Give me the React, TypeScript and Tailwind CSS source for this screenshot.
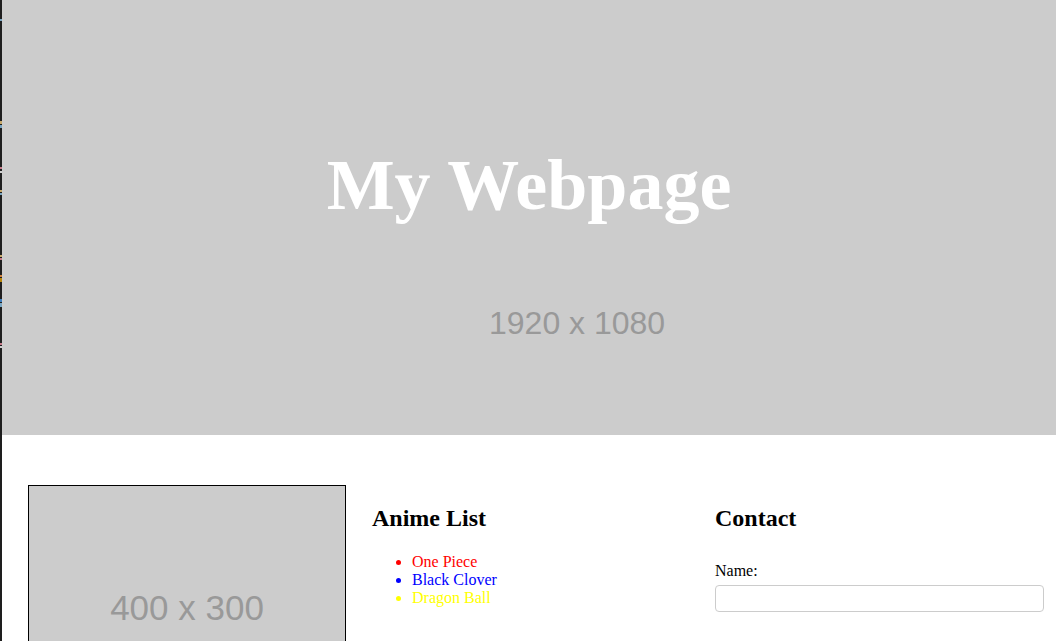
const marks = [
  { top: 19, h: 2, color: '#7aa6c2' },
  { top: 121, h: 3, color: '#c8a96a' },
  { top: 125, h: 3, color: '#7aa6c2' },
  { top: 167, h: 2, color: '#c77b8a' },
  { top: 171, h: 2, color: '#d0d0d0' },
  { top: 190, h: 2, color: '#c8a96a' },
  { top: 193, h: 2, color: '#7aa6c2' },
  { top: 255, h: 2, color: '#c8a96a' },
  { top: 258, h: 2, color: '#c77b8a' },
  { top: 275, h: 2, color: '#d0803a' },
  { top: 278, h: 4, color: '#b8860b' },
  { top: 299, h: 3, color: '#3d7ebf' },
  { top: 303, h: 4, color: '#7aa6c2' },
  { top: 343, h: 2, color: '#c77b8a' },
  { top: 346, h: 2, color: '#d0d0d0' },
];

const animeList = [
  { name: 'One Piece', color: 'text-[#ff0000] marker:text-[#ff0000]' },
  { name: 'Black Clover', color: 'text-[#0000ff] marker:text-[#0000ff]' },
  { name: 'Dragon Ball', color: 'text-[#ffff00] marker:text-[#ffff00]' },
];

export default function App() {
  return (
    <div className="flex h-[641px] overflow-hidden bg-white font-['Liberation_Serif',serif] text-black">
      {/* editor gutter strip */}
      <div className="relative w-[2px] shrink-0 bg-[#1e1e1e]">
        {marks.map((m, i) => (
          <div
            key={i}
            className="absolute left-0 w-[2px]"
            style={{ top: m.top, height: m.h, backgroundColor: m.color }}
          />
        ))}
      </div>

      <div className="flex-1">
        <header className="relative h-[435px] overflow-hidden bg-[#cccccc]">
          <div className="absolute left-[487px] top-[299px] font-['Liberation_Sans',sans-serif] text-[32px] leading-normal text-[#999999]">
            1920 x 1080
          </div>
          <h1 className="relative pt-[131px] text-center text-[72px] font-bold leading-normal text-white">
            My Webpage
          </h1>
        </header>

        <main className="flex gap-[26px] pl-[26px] pt-[50px]">
          <div className="flex h-[248px] w-[318px] shrink-0 items-center justify-center border border-black bg-[#cccccc]">
            <span className="mt-[-2px] font-['Liberation_Sans',sans-serif] text-[35px] leading-normal text-[#999999]">
              400 x 300
            </span>
          </div>

          <section className="w-[317px] shrink-0">
            <h2 className="mt-[19px] text-[24px] font-bold leading-[28px]">Anime List</h2>
            <ul className="mt-[21px] list-disc pl-[40px] text-[16px] leading-[18px]">
              {animeList.map((a) => (
                <li key={a.name} className={a.color}>
                  {a.name}
                </li>
              ))}
            </ul>
          </section>

          <section className="w-[329px] shrink-0">
            <h2 className="mt-[19px] text-[24px] font-bold leading-[28px]">Contact</h2>
            <form className="mt-[30px]">
              <label className="block text-[16px] leading-[18px]">Name:</label>
              <input
                type="text"
                className="mt-[5px] block h-[27px] w-full rounded-[4px] border border-[#cccccc] bg-white px-2"
              />
            </form>
          </section>
        </main>
      </div>
    </div>
  );
}
